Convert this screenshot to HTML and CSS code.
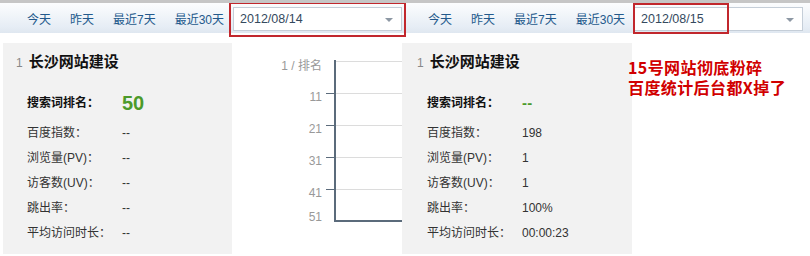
FILE: index.html
```html
<!DOCTYPE html>
<html lang="zh-CN">
<head>
    <meta charset="UTF-8">
    <title>百度统计 - 搜索词排名</title>
    <link rel="stylesheet" href="styles.css">
</head>
<body>
    <div class="page">
        <!-- 14号 -->
        <div class="shot shot-left">
            <div class="toolbar">
                <div class="links">
                    <a href="#">今天</a>
                    <a href="#">昨天</a>
                    <a href="#">最近7天</a>
                    <a href="#">最近30天</a>
                </div>
                <div class="date-select">
                    <span>2012/08/14</span>
                    <i class="caret"></i>
                </div>
            </div>
            <div class="content">
                <div class="card">
                    <div class="card-title"><span class="num">1</span>长沙网站建设</div>
                    <div class="row row-main"><span class="label">搜索词排名：</span><span class="rank">50</span></div>
                    <div class="row"><span class="label">百度指数：</span><span>--</span></div>
                    <div class="row"><span class="label">浏览量(PV)：</span><span>--</span></div>
                    <div class="row"><span class="label">访客数(UV)：</span><span>--</span></div>
                    <div class="row"><span class="label">跳出率：</span><span>--</span></div>
                    <div class="row"><span class="label">平均访问时长：</span><span>--</span></div>
                </div>
                <div class="chart">
                    <svg width="170" height="213" viewBox="0 0 170 213">
                        <g class="grid">
                            <line x1="103" y1="18.5" x2="170" y2="18.5"/>
                            <line x1="103" y1="50.5" x2="170" y2="50.5"/>
                            <line x1="103" y1="82.5" x2="170" y2="82.5"/>
                            <line x1="103" y1="114.5" x2="170" y2="114.5"/>
                            <line x1="103" y1="146.5" x2="170" y2="146.5"/>
                        </g>
                        <g class="ticks">
                            <line x1="94" y1="50.5" x2="102" y2="50.5"/>
                            <line x1="94" y1="82.5" x2="102" y2="82.5"/>
                            <line x1="94" y1="114.5" x2="102" y2="114.5"/>
                            <line x1="94" y1="146.5" x2="102" y2="146.5"/>
                        </g>
                        <path class="axis" d="M103 17 V178 H170"/>
                        <g class="axis-labels">
                            <text x="90" y="27">1 / 排名</text>
                            <text x="90" y="58">11</text>
                            <text x="90" y="90">21</text>
                            <text x="90" y="122">31</text>
                            <text x="90" y="154">41</text>
                            <text x="90" y="178">51</text>
                        </g>
                    </svg>
                </div>
            </div>
        </div>

        <!-- 15号 -->
        <div class="shot shot-right">
            <div class="toolbar">
                <div class="links">
                    <a href="#">今天</a>
                    <a href="#">昨天</a>
                    <a href="#">最近7天</a>
                    <a href="#">最近30天</a>
                </div>
                <div class="date-select">
                    <span>2012/08/15</span>
                    <i class="caret"></i>
                </div>
            </div>
            <div class="content">
                <div class="card">
                    <div class="card-title"><span class="num">1</span>长沙网站建设</div>
                    <div class="row row-main"><span class="label">搜索词排名：</span><span class="rank rank-none">- -</span></div>
                    <div class="row"><span class="label">百度指数：</span><span>198</span></div>
                    <div class="row"><span class="label">浏览量(PV)：</span><span>1</span></div>
                    <div class="row"><span class="label">访客数(UV)：</span><span>1</span></div>
                    <div class="row"><span class="label">跳出率：</span><span>100%</span></div>
                    <div class="row"><span class="label">平均访问时长：</span><span>00:00:23</span></div>
                </div>
            </div>
        </div>

        <!-- 标注 -->
        <div class="mark mark-left"></div>
        <div class="mark mark-right"></div>
        <div class="note">
            <div>15号网站彻底粉碎</div>
            <div>百度统计后台都X掉了</div>
        </div>
    </div>
</body>
</html>
```

FILE: styles.css
```css
body {
    margin: 0;
    padding: 0;
    background-color: #fff;
    font-family: "Liberation Sans", Arial, "Noto Sans CJK SC", sans-serif;
    font-size: 12px;
    color: #333;
}

.page {
    position: relative;
    display: flex;
    width: 810px;
    height: 256px;
    overflow: hidden;
    border-top: 3px solid #c6c6c6;
    box-sizing: border-box;
}

.shot-left {
    width: 402px;
}

.shot-right {
    width: 408px;
}

/* 顶部工具条 */
.toolbar {
    height: 30px;
    display: flex;
    align-items: center;
    gap: 9px;
    padding-left: 27px;
    background: linear-gradient(#fcfdfe, #e6edf5 80%, #dfe7f0);
}

.shot-right .toolbar {
    padding-left: 26px;
}

.links {
    display: flex;
    gap: 19px;
}

.links a {
    color: #23598c;
    text-decoration: none;
    font-size: 12px;
}

.date-select {
    position: relative;
    width: 161px;
    height: 22px;
    margin-top: 1px;
    border: 1px solid #c5ced8;
    background-color: #fff;
    display: flex;
    align-items: center;
    padding-left: 6px;
    box-sizing: content-box;
    font-size: 12.5px;
    color: #34495e;
}

.date-select .caret {
    position: absolute;
    right: 8px;
    top: 10px;
    border-left: 4px solid transparent;
    border-right: 4px solid transparent;
    border-top: 4px solid #8d98a4;
}

.content {
    display: flex;
    margin-top: 10px;
}

/* 数据卡片 */
.card {
    width: 229px;
    height: 211px;
    margin-left: 3px;
    background-color: #f2f2f2;
    padding: 9px 0 0 13px;
    box-sizing: border-box;
}

.shot-right .card {
    width: 230px;
    margin-left: 0;
    padding-left: 15px;
}

.card-title {
    font-size: 15px;
    font-weight: bold;
    color: #111;
    line-height: 20px;
}

.card-title .num {
    font-size: 12px;
    font-weight: normal;
    color: #888;
    margin-right: 6px;
}

.row {
    display: flex;
    align-items: center;
    line-height: 25px;
    padding-left: 11px;
    color: #333;
}

.shot-right .row {
    padding-left: 10px;
}

.row .label {
    width: 95px;
}

.row-main {
    line-height: 30px;
    margin-top: 15px;
    margin-bottom: 3px;
}

.row-main .label {
    font-weight: bold;
    color: #111;
}

.rank {
    font-size: 20px;
    font-weight: bold;
    color: #4c9a2a;
}

.rank-none {
    font-size: 15px;
    letter-spacing: -1px;
    word-spacing: -2px;
}

/* 排名走势 */
.chart {
    width: 170px;
    height: 213px;
    background-color: #fff;
}

.chart svg {
    display: block;
}

.grid line {
    stroke: #dcdcdc;
    stroke-width: 1;
}

.ticks line {
    stroke: #5b6b7b;
    stroke-width: 1;
}

.axis {
    fill: none;
    stroke: #5b6b7b;
    stroke-width: 2;
}

.axis-labels text {
    font-family: "Liberation Sans", "Noto Sans CJK SC", sans-serif;
    font-size: 12px;
    fill: #999;
    text-anchor: end;
}

/* 红框和文字标注 */
.mark {
    position: absolute;
    border: 2px solid #c1272d;
    box-sizing: border-box;
}

.mark-left {
    left: 229px;
    top: -1px;
    width: 177px;
    height: 35px;
}

.mark-right {
    left: 633px;
    top: 0;
    width: 96px;
    height: 31px;
}

.note {
    position: absolute;
    left: 628px;
    top: 55px;
    display: flex;
    flex-direction: column;
    gap: 1px;
    font-family: "Noto Sans CJK SC", sans-serif;
    font-size: 16px;
    font-weight: bold;
    line-height: 19px;
    letter-spacing: 0.4px;
    color: #d10000;
}
```
